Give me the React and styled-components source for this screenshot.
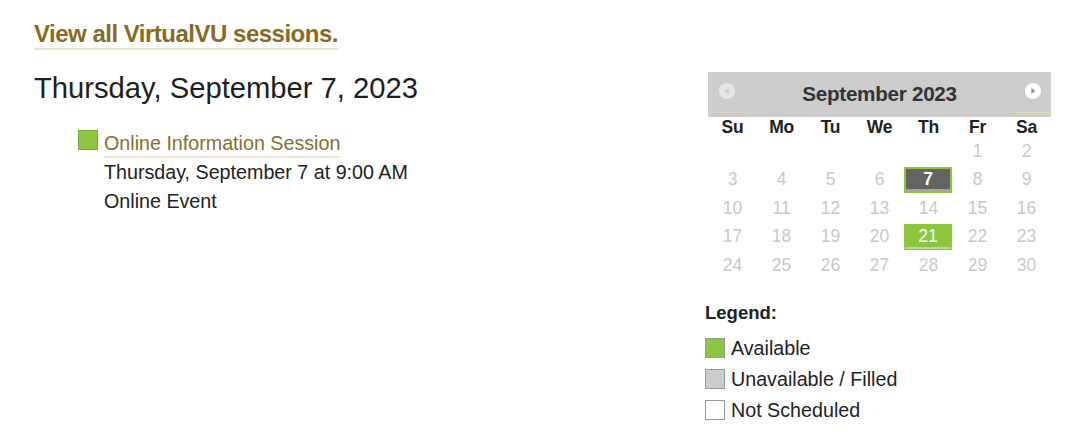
import React from "react";
import styled, { createGlobalStyle } from "styled-components";

const GlobalStyle = createGlobalStyle`
  body {
    margin: 0;
    background: #fff;
    font-family: "Liberation Sans", Arial, sans-serif;
    color: #222;
  }
`;

const Page = styled.div`
  width: 1080px;
  height: 440px;
  box-sizing: border-box;
  padding: 20px 29px 0 34px;
  overflow: hidden;
`;

const AllLink = styled.a`
  display: inline-block;
  font-size: 24px;
  font-weight: bold;
  letter-spacing: -0.5px;
  line-height: 28px;
  color: #8a6a22;
  text-decoration: none;
  border-bottom: 2px solid #ece3d2;
`;

const Columns = styled.div`
  display: grid;
  grid-template-columns: 1fr 346px;
  margin-top: 21px;
`;

const DayHeading = styled.h2`
  margin: 0;
  font-size: 29.2px;
  font-weight: normal;
  line-height: 34px;
  color: #1e1e1e;
`;

const Session = styled.div`
  display: flex;
  gap: 6px;
  margin: 25px 0 0 44px;
`;

const Swatch = styled.span`
  flex: none;
  width: 18px;
  height: 18px;
  border: 1px solid ${(p) => p.edge || "#999"};
  background: ${(p) => p.fill || "#fff"};
`;

const SessionBody = styled.div`
  font-size: 19.7px;
  line-height: 29px;
  color: #222;
  margin-top: -1px;
`;

const SessionLink = styled.a`
  display: inline-block;
  color: #8c6d2c;
  text-decoration: none;
  line-height: 24px;
  border-bottom: 2px solid #eee6d6;
  padding-bottom: 1px;
  margin-bottom: -2px;
`;

const Side = styled.div`
  display: flex;
  flex-direction: column;
`;

const Calendar = styled.div`
  width: 343px;
  margin: 1px 0 0 3px;
`;

const CalHead = styled.div`
  height: 45px;
  background: #cccccc;
  display: flex;
  align-items: stretch;
  justify-content: space-between;
`;

const NavBtn = styled.a`
  width: 37px;
  display: flex;
  align-items: center;
  justify-content: center;
  box-sizing: border-box;
  padding-bottom: 2px;
  border-bottom: 1px solid #e2d6b4;
  margin-bottom: 4px;
  opacity: ${(p) => (p.off ? 0.5 : 1)};
`;

const MonthTitle = styled.div`
  align-self: center;
  font-size: 20.7px;
  font-weight: bold;
  letter-spacing: -0.3px;
  color: #333;
  padding-bottom: 2px;
`;

const Grid = styled.div`
  display: grid;
  grid-template-columns: repeat(7, 49px);
  grid-template-rows: 20px;
  grid-auto-rows: 28.5px;
`;

const WeekDay = styled.div`
  line-height: 20px;
  text-align: center;
  font-size: 17.5px;
  font-weight: bold;
  color: #222;
  letter-spacing: -0.3px;
`;

const Cell = styled.div`
  display: flex;
  align-items: center;
  justify-content: center;
  font-size: 17.5px;
  color: #c8c8c8;
  box-sizing: border-box;
  ${(p) =>
    p.kind === "selected" &&
    `
    margin: 1px 1px 1px 0;
    background: #636363;
    color: #fff;
    font-weight: bold;
    border: 2px solid #8cc63f;
    box-shadow: inset 0 -2px 0 #a4a4a4;
  `}
  ${(p) =>
    p.kind === "open" &&
    `
    margin: 1px 1px 1px 0;
    background: #8cc63f;
    color: #fff;
    border: 1px solid #8cc63f;
    box-shadow: inset 0 -2px 0 #b8da90;
  `}
`;

const Legend = styled.div`
  margin-top: 21.5px;
`;

const LegendTitle = styled.div`
  font-size: 18.5px;
  font-weight: bold;
  line-height: 24px;
  color: #222;
  margin-bottom: 7.5px;
`;

const LegendRow = styled.div`
  display: flex;
  align-items: center;
  gap: 6px;
  height: 31px;
  font-size: 19.7px;
  color: #222;
`;

const Arrow = ({ dir }) => (
  <svg width="16" height="16" viewBox="0 0 16 16">
    <circle cx="8" cy="8" r="8" fill="#fff" />
    {dir === "left" ? (
      <path d="M9.6 4.8 L5.6 8 L9.6 11.2 Z" fill="#cccccc" />
    ) : (
      <path d="M6.4 4.8 L10.4 8 L6.4 11.2 Z" fill="#999" />
    )}
  </svg>
);

const days = ["Su", "Mo", "Tu", "We", "Th", "Fr", "Sa"];

const cells = [];
for (let i = 0; i < 5; i++) cells.push(null);
for (let d = 1; d <= 30; d++) cells.push(d);

const kindOf = (d) => (d === 7 ? "selected" : d === 21 ? "open" : null);

const legend = [
  { label: "Available", fill: "#8cc63f" },
  { label: "Unavailable / Filled", fill: "#cccccc" },
  { label: "Not Scheduled", fill: "#fff" },
];

const App = () => {
  return (
    <>
      <GlobalStyle />
      <Page>
        <AllLink href="#">View all VirtualVU sessions.</AllLink>
        <Columns>
          <div>
            <DayHeading>Thursday, September 7, 2023</DayHeading>
            <Session>
              <Swatch fill="#8cc63f" edge="#7aa83a" />
              <SessionBody>
                <SessionLink href="#">Online Information Session</SessionLink>
                <div>Thursday, September 7 at 9:00 AM</div>
                <div>Online Event</div>
              </SessionBody>
            </Session>
          </div>
          <Side>
            <Calendar>
              <CalHead>
                <NavBtn off>
                  <Arrow dir="left" />
                </NavBtn>
                <MonthTitle>September 2023</MonthTitle>
                <NavBtn>
                  <Arrow dir="right" />
                </NavBtn>
              </CalHead>
              <Grid>
                {days.map((d) => (
                  <WeekDay key={d}>{d}</WeekDay>
                ))}
                {cells.map((d, i) => (
                  <Cell key={i} kind={kindOf(d)}>
                    {d}
                  </Cell>
                ))}
              </Grid>
            </Calendar>
            <Legend>
              <LegendTitle>Legend:</LegendTitle>
              {legend.map((l) => (
                <LegendRow key={l.label}>
                  <Swatch fill={l.fill} edge="#999" />
                  {l.label}
                </LegendRow>
              ))}
            </Legend>
          </Side>
        </Columns>
      </Page>
    </>
  );
};

export default App;
